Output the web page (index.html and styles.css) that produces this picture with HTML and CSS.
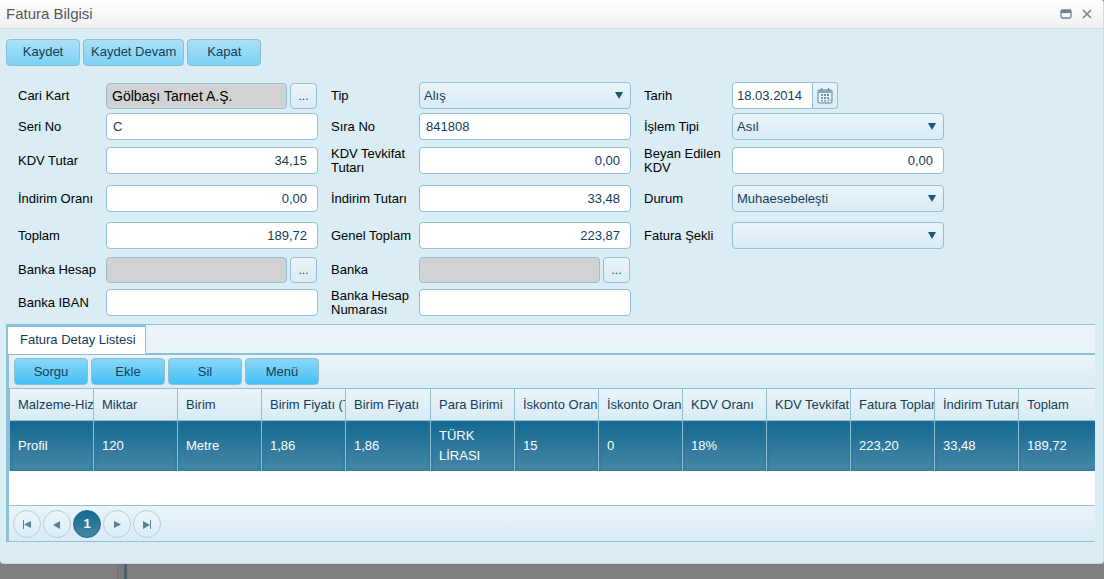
FILE: index.html
```html
<!DOCTYPE html>
<html lang="tr">
<head>
<meta charset="utf-8">
<title>Fatura Bilgisi</title>
<link rel="stylesheet" href="styles.css">
</head>
<body>
<main class="dialog">
  <header class="titlebar">
    <h1 class="title">Fatura Bilgisi</h1>
    <button class="winbtn" type="button" aria-label="Büyüt"><svg width="12" height="10" viewBox="0 0 12 10"><rect x="1" y="1" width="10" height="8" rx="1.5" fill="#f6f6f6" stroke="#6f808c" stroke-width="1.3"/><path d="M1 1h10v3H1z" fill="#6f808c"/></svg></button>
    <button class="winbtn" type="button" aria-label="Pencereyi kapat"><svg width="10" height="10" viewBox="0 0 10 10"><path d="M1 1l8 8M9 1L1 9" stroke="#7b8791" stroke-width="1.7" fill="none"/></svg></button>
  </header>

  <div class="actions">
    <button class="btn btn-light" type="button">Kaydet</button>
    <button class="btn btn-light" type="button">Kaydet Devam</button>
    <button class="btn btn-light" type="button">Kapat</button>
  </div>

  <form class="form">
    <label class="label" for="cari">Cari Kart</label>
    <div class="field lookup"><input class="input disabled" id="cari" value="Gölbaşı Tarnet A.Ş." readonly><button class="pick" type="button">...</button></div>
    <label class="label" for="tip">Tip</label>
    <div class="field select"><select class="input" id="tip"><option>Alış</option></select><svg class="arrow" width="8" height="7" viewBox="0 0 8 7"><path d="M0 0h8L4 7z"/></svg></div>
    <label class="label" for="tarih">Tarih</label>
    <div class="field date"><input class="input" id="tarih" value="18.03.2014"><button class="calendar" type="button" aria-label="Takvim"><svg width="16" height="16" viewBox="0 0 16 16"><rect x="1" y="2" width="14" height="13" rx="2" fill="#eef5f9" stroke="#86a8b7" stroke-width="1.5"/><path d="M1 2h14v3H1z" fill="#86a8b7"/><path d="M4.500 0v3M11.500 0v3" stroke="#6f95a6" stroke-width="1.500"/><path d="M7 6h2v2H7zM10 6h2v2h-2zM4 9h2v2H4zM7 9h2v2H7zM10 9h2v2h-2zM4 12h2v1.500H4zM7 12h2v1.500H7zM4 6h2v2H4z" fill="#7095a5"/><path d="M11 15v-3h4" fill="none" stroke="#86a8b7"/></svg></button></div>

    <label class="label" for="seri">Seri No</label>
    <div class="field"><input class="input" id="seri" value="C"></div>
    <label class="label" for="sira">Sıra No</label>
    <div class="field"><input class="input" id="sira" value="841808"></div>
    <label class="label" for="islem">İşlem Tipi</label>
    <div class="field select"><select class="input" id="islem"><option>Asıl</option></select><svg class="arrow" width="8" height="7" viewBox="0 0 8 7"><path d="M0 0h8L4 7z"/></svg></div>

    <label class="label" for="kdv">KDV Tutar</label>
    <div class="field"><input class="input number" id="kdv" value="34,15"></div>
    <label class="label" for="tevkifat">KDV Tevkifat Tutarı</label>
    <div class="field"><input class="input number" id="tevkifat" value="0,00"></div>
    <label class="label" for="beyan">Beyan Edilen KDV</label>
    <div class="field"><input class="input number" id="beyan" value="0,00"></div>

    <label class="label" for="oran">İndirim Oranı</label>
    <div class="field"><input class="input number" id="oran" value="0,00"></div>
    <label class="label" for="indirim">İndirim Tutarı</label>
    <div class="field"><input class="input number" id="indirim" value="33,48"></div>
    <label class="label" for="durum">Durum</label>
    <div class="field select"><select class="input" id="durum"><option>Muhaesebeleşti</option></select><svg class="arrow" width="8" height="7" viewBox="0 0 8 7"><path d="M0 0h8L4 7z"/></svg></div>

    <label class="label" for="toplam">Toplam</label>
    <div class="field"><input class="input number" id="toplam" value="189,72"></div>
    <label class="label" for="genel">Genel Toplam</label>
    <div class="field"><input class="input number" id="genel" value="223,87"></div>
    <label class="label" for="sekil">Fatura Şekli</label>
    <div class="field select"><select class="input" id="sekil"><option></option></select><svg class="arrow" width="8" height="7" viewBox="0 0 8 7"><path d="M0 0h8L4 7z"/></svg></div>

    <label class="label" for="hesap">Banka Hesap</label>
    <div class="field lookup"><input class="input disabled" id="hesap" readonly><button class="pick" type="button">...</button></div>
    <label class="label" for="banka">Banka</label>
    <div class="field lookup"><input class="input disabled" id="banka" readonly><button class="pick" type="button">...</button></div>

    <label class="label new-row" for="iban">Banka IBAN</label>
    <div class="field"><input class="input" id="iban"></div>
    <label class="label" for="numara">Banka Hesap Numarası</label>
    <div class="field"><input class="input" id="numara"></div>
  </form>

  <section class="tabs">
    <div class="tabnav" role="tablist"><button class="tab" type="button" role="tab" aria-selected="true">Fatura Detay Listesi</button></div>
    <div class="panel">
      <div class="toolbar">
        <button class="btn btn-strong" type="button">Sorgu</button>
        <button class="btn btn-strong" type="button">Ekle</button>
        <button class="btn btn-strong" type="button">Sil</button>
        <button class="btn btn-strong" type="button">Menü</button>
      </div>
      <div class="scroller">
        <table class="grid">
          <colgroup><col span="4"><col class="wide"><col span="8"></colgroup>
          <thead><tr><th>Malzeme-Hizmet</th><th>Miktar</th><th>Birim</th><th>Birim Fiyatı (TL)</th><th>Birim Fiyatı</th><th>Para Birimi</th><th>İskonto Oranı</th><th>İskonto Oranı</th><th>KDV Oranı</th><th>KDV Tevkifat</th><th>Fatura Toplam</th><th>İndirim Tutarı</th><th>Toplam</th></tr></thead>
          <tbody><tr><td>Profil</td><td>120</td><td>Metre</td><td>1,86</td><td>1,86</td><td>TÜRK LİRASI</td><td>15</td><td>0</td><td>18%</td><td></td><td>223,20</td><td>33,48</td><td>189,72</td></tr></tbody>
        </table>
      </div>
      <nav class="pager" aria-label="Sayfalar">
        <button class="page" type="button" aria-label="İlk"><svg width="10" height="10" viewBox="0 0 10 10"><path d="M1 1h1v9H1zM9 2v7L2 5.500z"/></svg></button>
        <button class="page" type="button" aria-label="Önceki"><svg width="10" height="10" viewBox="0 0 10 10"><path d="M8 2v8L1 6z"/></svg></button>
        <button class="page current" type="button">1</button>
        <button class="page" type="button" aria-label="Sonraki"><svg width="10" height="10" viewBox="0 0 10 10"><path d="M2 2v7L9 5.500z"/></svg></button>
        <button class="page" type="button" aria-label="Son"><svg width="10" height="10" viewBox="0 0 10 10"><path d="M8 1h1v9H8zM1 2v8L8 6z"/></svg></button>
      </nav>
    </div>
  </section>
</main>
<div class="backdrop"><div class="side"></div><div class="splitter"></div></div>
</body>
</html>
```
FILE: styles.css
```css
* { box-sizing: border-box; }
body {
  margin: 0;
  min-height: 100vh;
  display: flex;
  flex-direction: column;
  background: #808080;
  font: 13px/16px "Liberation Sans", Arial, sans-serif;
  color: #000;
}
button, input, select { font: inherit; color: #124058; margin: 0; }
button { padding: 0; cursor: pointer; }
svg { display: block; }

.dialog {
  background: #daecf4;
  border-right: 1px solid #d3d9dd;
  border-bottom: 1px solid #d3d6d8;
  border-radius: 0 3px 4px 4px;
  padding-bottom: 21px;
}
.titlebar {
  height: 29px;
  display: flex;
  align-items: center;
  gap: 6px;
  padding: 0 9px 0 6px;
  border-bottom: 1px solid #dadada;
  border-radius: 0 3px 0 0;
  background: linear-gradient(#fefefe, #f1f1f1);
}
.title { flex: 1; margin: 0; font-size: 15px; font-weight: 400; color: #4f5963; }
.winbtn {
  width: 15px;
  height: 16px;
  border: 0;
  background: none;
  display: grid;
  place-items: center;
}

.actions { display: flex; gap: 3px; padding: 10px 6px 14px; }
.btn {
  min-width: 74px;
  height: 27px;
  padding: 0 7px 2px;
  border: 1px solid #8cbdd2;
  border-radius: 4px;
  white-space: nowrap;
}
.btn-light { background: linear-gradient(#ade1f8, #7bd1f5); }
.btn-strong { background: linear-gradient(#8ad7f8, #45c0f5); padding-bottom: 0; }

.form {
  display: grid;
  grid-template-columns: repeat(3, 88px minmax(0, 225px));
  grid-template-rows: 31px 31px 37px 39px 35px 34px 31px;
  align-items: center;
  padding: 0 18px;
}
.label { line-height: 14px; padding-right: 8px; }
.new-row { grid-column: 1; }
.field { padding-right: 13px; display: flex; }
.input {
  width: 100%;
  min-width: 0;
  height: 27px;
  padding: 0 6px;
  border: 1px solid #93c0d5;
  border-radius: 4px;
  background: #fff;
  outline: 0;
}
.number { text-align: right; padding-right: 10px; }
.lookup { gap: 3px; padding-right: 14px; }
.disabled { height: 26px; background: #d2d2d2; color: #000; font-size: 14px; padding: 0 5px; }
.pick {
  flex: 0 0 27px;
  height: 26px;
  border: 1px solid #93c0d5;
  border-radius: 4px;
  background: linear-gradient(#ebf4fa, #d9ebf4);
  font-size: 12px;
}
.select { display: grid; align-items: center; }
.select .input {
  grid-area: 1 / 1;
  appearance: none;
  padding: 0 24px 0 4px;
  background: linear-gradient(#ebf4fa, #d9ebf4);
}
.arrow { grid-area: 1 / 1; justify-self: end; margin-right: 8px; fill: #17597b; pointer-events: none; }
.date .input { width: 81px; border-radius: 4px 0 0 4px; padding: 0 4px; }
.calendar {
  width: 25px;
  display: grid;
  place-items: center;
  border: 1px solid #93c0d5;
  border-left: 0;
  border-radius: 0 4px 4px 0;
  background: linear-gradient(#ebf4fa, #d9ebf4);
}

.tabs {
  margin: 6px 8px 0 6px;
  border-top: 1px solid #8fc0d4;
  border-left: 2px solid #8cc0d6;
}
.tabnav {
  height: 30px;
  display: flex;
  border-bottom: 2px solid #8cc0d6;
  background: linear-gradient(#ecf3fb, #e8f3f9);
}
.tab {
  height: 29px;
  padding: 0 9px 2px 12px;
  border: 0 solid #7cc5e4;
  border-width: 2px 1px 0 0;
  background: #fff;
}
.panel { border-left: 1px solid #93bfd1; border-bottom: 1px solid #93bfd1; background: #fff; }
.toolbar { display: flex; gap: 3px; padding: 3px 5px; background: linear-gradient(#eaf4f9, #d9ebf4); }
.scroller { overflow: hidden; padding-bottom: 34px; }
.grid { width: 1093px; table-layout: fixed; border-collapse: separate; border-spacing: 0; }
.grid col { width: 84px; }
.grid .wide { width: 85px; }
.grid th, .grid td { text-align: left; padding: 0 8px; border-left: 1px solid #8fbed2; }
.grid th {
  height: 33px;
  padding-right: 0;
  font-weight: 400;
  color: #124058;
  white-space: nowrap;
  overflow: hidden;
  border-top: 1px solid #8fbed2;
  border-bottom: 1px solid #8fbed2;
  background: linear-gradient(#ebf4fa, #d9ebf4);
}
.grid td {
  height: 50px;
  line-height: 20px;
  color: #fff;
  background: linear-gradient(#136991, #4788a6);
  box-shadow: inset 0 0 4px #257299;
}
.pager {
  display: flex;
  align-items: center;
  gap: 2px;
  height: 36px;
  padding: 0 4px;
  border-top: 1px solid #93bfd1;
  background: linear-gradient(#eaf4f9, #d9ebf4);
}
.page {
  width: 28px;
  height: 28px;
  display: grid;
  place-items: center;
  border: 1px solid #afd0df;
  border-radius: 50%;
  background: linear-gradient(#edf6fa, #dcedf5);
  fill: #568398;
}
.page.current { border-color: #1a698e; background: linear-gradient(#146a92, #4586a4); color: #fff; font-weight: 700; }

.backdrop { flex: 1; display: flex; }
.side { width: 118px; border-right: 1px solid #727272; }
.splitter { width: 9px; border-right: 3px solid #4b626e; background: #7a7a7a; }
```
